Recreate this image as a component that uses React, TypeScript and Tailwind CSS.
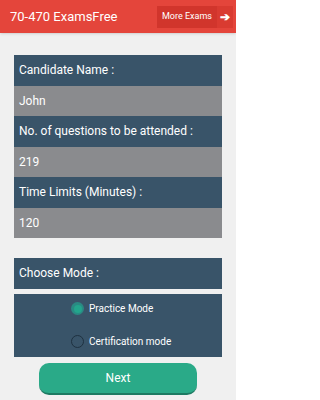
import { useState } from 'react';

const font = { fontFamily: 'Roboto, "Liberation Sans", sans-serif' };

const Row = ({ text, dark }: { text: string; dark?: boolean }) => (
    <div
        className={`h-[30.5px] flex items-center px-[5px] text-[12px] text-white ${dark ? 'bg-[#395469]' : 'bg-[#8a8b8e]'}`}
    >
        {text}
    </div>
);

const Radio = ({ label, checked, onClick }: { label: string; checked: boolean; onClick: () => void }) => (
    <div onClick={onClick} className="flex items-center gap-[5px] cursor-pointer pl-[57px]">
        <div
            className={`w-[13px] h-[13px] rounded-full flex items-center justify-center ${checked ? 'bg-[#2a8a83] ' : 'border-[1.5px] border-[#1e3140]'}`}
        >
            {checked && <div className="w-[8px] h-[8px] rounded-full bg-[#23a58c]" />}
        </div>
        <span className="text-[10px] text-white">{label}</span>
    </div>
);

const App = () => {
    const [mode, setMode] = useState('practice');

    return (
        <div className="w-[236px] h-[400px] bg-[#f0f0f0] overflow-hidden" style={font}>
            <div className="h-[33px] bg-[#e4453b] flex items-center justify-between pl-[10px] pr-[3px] shadow-sm">
                <span className="text-white text-[13px]">70-470 ExamsFree</span>
                <div className="flex items-center h-[22px]">
                    <div className="h-full bg-[#d1352c] flex items-center px-[5px] text-white text-[9px]">More Exams</div>
                    <div className="h-full w-[16px] bg-[#d93b31] flex items-center justify-center text-white text-[12px] font-bold">
                        ➔
                    </div>
                </div>
            </div>

            <div className="mx-[14px] mt-[22px] flex flex-col">
                <Row text="Candidate Name :" dark />
                <Row text="John" />
                <Row text="No. of questions to be attended :" dark />
                <Row text="219" />
                <Row text="Time Limits (Minutes) :" dark />
                <Row text="120" />
            </div>

            <div className="mx-[14px] mt-[20px] flex flex-col">
                <Row text="Choose Mode :" dark />
                <div className="mt-[5px] h-[63px] bg-[#395469] flex flex-col justify-center gap-[18px]">
                    <Radio label="Practice Mode" checked={mode === 'practice'} onClick={() => setMode('practice')} />
                    <Radio label="Certification mode" checked={mode === 'cert'} onClick={() => setMode('cert')} />
                </div>
            </div>

            <div className="flex justify-center mt-[6px]">
                <button className="w-[158px] h-[32px] rounded-[10px] bg-[#2aaa88] border-b-[2px] border-[#1d7a62] text-white text-[12px]">
                    Next
                </button>
            </div>
        </div>
    );
};

export default App;
